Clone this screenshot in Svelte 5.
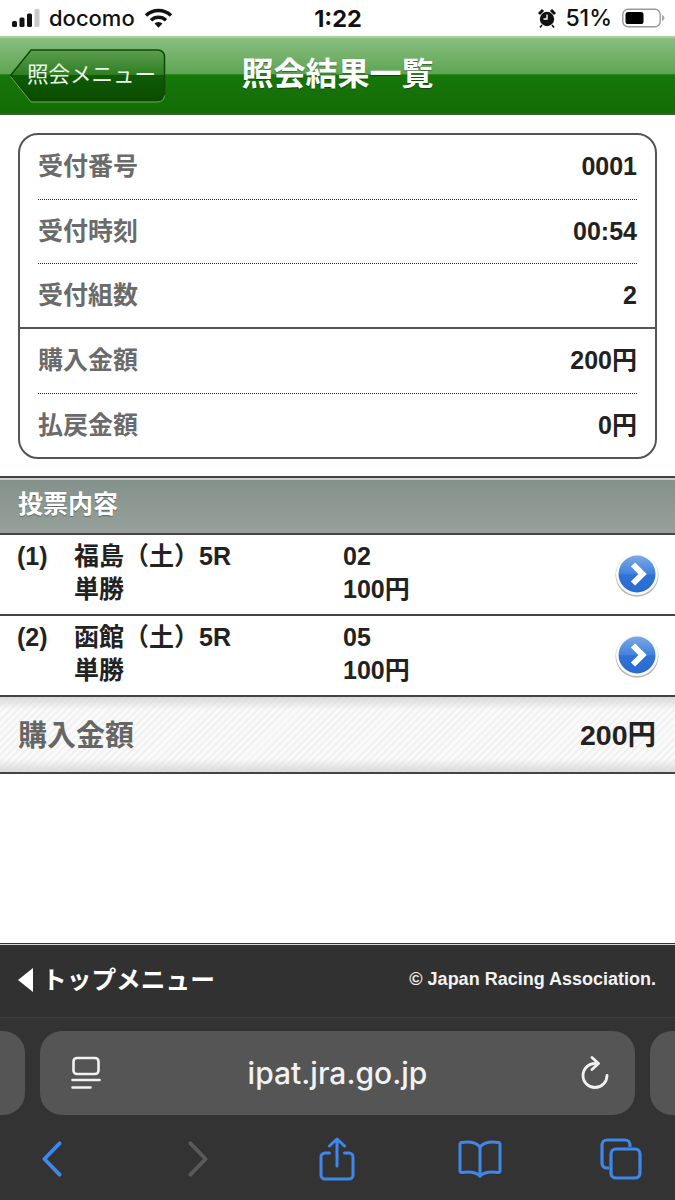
<script>
	const summaryTop = [
		{ label: '受付番号', value: '0001' },
		{ label: '受付時刻', value: '00:54' },
		{ label: '受付組数', value: '2' }
	];
	const summaryBottom = [
		{ label: '購入金額', value: '200円' },
		{ label: '払戻金額', value: '0円' }
	];
	const bets = [
		{ no: '(1)', race: '福島（土）', round: '5R', type: '単勝', horse: '02', amount: '100円' },
		{ no: '(2)', race: '函館（土）', round: '5R', type: '単勝', horse: '05', amount: '100円' }
	];
</script>

<div class="page">
	<div class="status">
		<div class="status-left">
			<svg width="30" height="20" viewBox="0 0 30 20">
				<rect x="1" y="13" width="5" height="6" rx="1.5" fill="#111" />
				<rect x="8.5" y="9.5" width="5" height="9.5" rx="1.5" fill="#111" />
				<rect x="16" y="5.5" width="5" height="13.5" rx="1.5" fill="#111" />
				<rect x="23.5" y="1" width="5" height="18" rx="1.5" fill="#c9c9c9" />
			</svg>
			<span class="carrier">docomo</span>
			<svg class="wifi" width="29" height="20" viewBox="0 0 29 20">
				<path d="M2 7.5a18 18 0 0 1 25 0" fill="none" stroke="#111" stroke-width="3.4" />
				<path d="M7 12.2a11 11 0 0 1 15 0" fill="none" stroke="#111" stroke-width="3.4" />
				<path d="M10.5 15.6a5.6 5.6 0 0 1 8 0L14.500 19.800z" fill="#111" />
			</svg>
		</div>
		<div class="time">1:22</div>
		<div class="status-right">
			<svg width="18" height="20" viewBox="0 0 18 20">
				<circle cx="9" cy="11" r="7.200" fill="#111" />
				<path d="M1 6l4-4M17 6l-4-4" stroke="#111" stroke-width="3" />
				<path d="M9 6.500V11H5.500" fill="none" stroke="#fff" stroke-width="1.400" />
				<path d="M4 17l-2 2.500M14 17l2 2.500" stroke="#111" stroke-width="1.600" />
			</svg>
			<span class="battery-text">51%</span>
			<svg width="43" height="20" viewBox="0 0 43 20">
				<rect x="0.800" y="1.300" width="37.400" height="17.400" rx="5.200" fill="none" stroke="#999" stroke-width="1.400" />
				<rect x="3.500" y="4" width="18" height="12" rx="2.600" fill="#000" />
				<path d="M40 7v6c1.600-.5 2.400-1.700 2.400-3s-.8-2.500-2.400-3z" fill="#aaa" />
			</svg>
		</div>
	</div>

	<header class="topbar">
		<a class="back" href="#menu">
			<svg class="back-shape" width="157" height="55" viewBox="0 0 157 55">
				<defs>
					<linearGradient id="backFill" x1="0" y1="0" x2="0" y2="1">
						<stop offset="0" stop-color="#5b9e50" />
						<stop offset="0.48" stop-color="#2f7f22" />
						<stop offset="0.5" stop-color="#0f5c04" />
						<stop offset="1" stop-color="#0c4a02" />
					</linearGradient>
				</defs>
				<path d="M1.500 27.500L22 2h127a6.500 6.500 0 0 1 6.500 6.500v38a6.500 6.500 0 0 1-6.500 6.500H22z" fill="url(#backFill)" stroke="#0e4a06" stroke-width="1.500" />
				<path d="M1.500 28.500L22 54h127a6.500 6.500 0 0 0 6.500-6.500" fill="none" stroke="#6bab60" stroke-width="1" />
			</svg>
			<span>照会メニュー</span>
		</a>
		<h1>照会結果一覧</h1>
		<div></div>
	</header>

	<main>
		<section class="card">
			<div class="group">
				{#each summaryTop as row}
					<div class="row"><span class="label">{row.label}</span><span class="value">{row.value}</span></div>
				{/each}
			</div>
			<div class="group">
				{#each summaryBottom as row}
					<div class="row"><span class="label">{row.label}</span><span class="value">{row.value}</span></div>
				{/each}
			</div>
		</section>

		<h2 class="section-title">投票内容</h2>

		{#each bets as bet}
			<div class="bet">
				<span class="no">{bet.no}</span>
				<div class="bet-info race">
					<span>{bet.race}{bet.round}</span>
					<span>{bet.type}</span>
				</div>
				<div class="bet-info">
					<span>{bet.horse}</span>
					<span>{bet.amount}</span>
				</div>
				<span class="go">
					<svg width="46" height="46" viewBox="0 0 46 46">
						<defs>
							<linearGradient id="goFill" x1="0" y1="0" x2="0" y2="1">
								<stop offset="0" stop-color="#7aa9e6" />
								<stop offset="0.5" stop-color="#4182dc" />
								<stop offset="0.52" stop-color="#2f72d6" />
								<stop offset="1" stop-color="#2a6cd0" />
							</linearGradient>
						</defs>
						<circle cx="23" cy="24.200" r="21.500" fill="#8a8a8a" opacity="0.600" />
						<circle cx="23" cy="23" r="21" fill="#fbfbfb" />
						<circle cx="23" cy="23" r="18.500" fill="url(#goFill)" />
						<path d="M19 13.500l9.500 9.500-9.500 9.500" fill="none" stroke="#fff" stroke-width="6" />
					</svg>
				</span>
			</div>
		{/each}

		<div class="total">
			<span class="total-label">購入金額</span>
			<span class="total-value">200円</span>
		</div>
	</main>

	<footer class="site-footer">
		<a class="top-link" href="#top"><span class="tri"></span><span class="top-text">トップメニュー</span></a>
		<span class="copy">© Japan Racing Association.</span>
	</footer>

	<div class="safari">
		<div class="address-row">
			<div class="pill side-left"></div>
			<div class="pill address">
				<svg width="30" height="34" viewBox="0 0 30 34" fill="none" stroke="#f2f2f2" stroke-width="2.600" stroke-linecap="round">
					<rect x="2.500" y="2" width="25" height="16" rx="3.500" />
					<path d="M1.500 24h27M1.500 31.500h18" />
				</svg>
				<span class="url">ipat.jra.go.jp</span>
				<svg class="reload" width="30" height="34" viewBox="0 0 30 34" fill="none" stroke="#f2f2f2" stroke-width="2.800" stroke-linecap="round" stroke-linejoin="round">
					<path d="M15 7.500A12 12 0 1 0 27 19.500" />
					<path d="M12 1.500l6.500 6-6.500 6" />
				</svg>
			</div>
			<div class="pill side-right"></div>
		</div>
		<nav class="toolbar">
			<svg width="22" height="36" viewBox="0 0 22 38" fill="none" stroke="#3f87ea" stroke-width="4" stroke-linecap="round" stroke-linejoin="round">
				<path d="M19 2.500L3 19l16 16.500" />
			</svg>
			<svg class="fwd" width="22" height="36" viewBox="0 0 22 38" fill="none" stroke="#5a5a5a" stroke-width="4" stroke-linecap="round" stroke-linejoin="round">
				<path d="M3 2.500L19 19 3 35.500" />
			</svg>
			<svg class="share" width="36" height="44" viewBox="0 0 36 44" fill="none" stroke="#3f87ea" stroke-width="3" stroke-linecap="round" stroke-linejoin="round">
				<path d="M10.500 16H6a4 4 0 0 0-4 4v18a4 4 0 0 0 4 4h24a4 4 0 0 0 4-4V20a4 4 0 0 0-4-4h-4.500" />
				<path d="M18 29V2M10.500 9L18 2l7.500 7" />
			</svg>
			<svg class="book" width="44" height="38" viewBox="0 0 44 38" fill="none" stroke="#3f87ea" stroke-width="3" stroke-linecap="round" stroke-linejoin="round">
				<path d="M22 7C18 2.500 11 1.500 3.500 2.500 2.500 2.700 2 3.500 2 4.500V31c0 1 .8 1.600 1.800 1.500C11 31.500 18 32 22 36c4-4 11-4.500 18.200-3.500 1 .1 1.800-.5 1.800-1.500V4.500c0-1-.5-1.800-1.500-2C33 1.500 26 2.500 22 7z" />
				<path d="M22 7v29" />
			</svg>
			<svg class="tabs" width="42" height="42" viewBox="0 0 42 42" fill="none" stroke="#3f87ea" stroke-width="3.200" stroke-linejoin="round">
				<path d="M9 30H7a5 5 0 0 1-5-5V7a5 5 0 0 1 5-5h18a5 5 0 0 1 5 5v2" />
				<rect x="11" y="11" width="29" height="29" rx="5" />
			</svg>
		</nav>
	</div>
</div>

<style>
	:global(body) {
		background: #fff;
	}

	.page {
		width: 675px;
		height: 1200px;
		display: flex;
		flex-direction: column;
		overflow: hidden;
		font-family: 'Liberation Sans', 'Noto Sans CJK JP', sans-serif;
		color: #222;
	}

	/* status bar */
	.status {
		height: 36px;
		display: grid;
		grid-template-columns: 1fr auto 1fr;
		align-items: center;
		padding: 0 10px 0 11px;
		background: #fff;
		color: #111;
		font-family: Inter, 'Liberation Sans', sans-serif;
	}

	.status-left,
	.status-right {
		display: flex;
		align-items: center;
	}

	.status-right {
		justify-content: flex-end;
	}

	.carrier {
		margin-left: 8px;
		font-size: 22px;
		font-weight: 500;
	}

	.wifi {
		margin-left: 9px;
	}

	.time {
		font-size: 23.500px;
		font-weight: 700;
	}

	.battery-text {
		margin: 0 10px 0 9px;
		font-size: 23px;
		font-weight: 500;
	}

	/* green title bar */
	.topbar {
		height: 79px;
		box-sizing: border-box;
		display: grid;
		grid-template-columns: 1fr auto 1fr;
		align-items: center;
		padding: 0 9px;
		border-top: 2px solid #a9d0a2;
		border-bottom: 2px solid #3c5c36;
		background: linear-gradient(#8abd80 0, #5ea553 48%, #16770a 49%, #146c05 100%);
	}

	.back {
		position: relative;
		width: 157px;
		height: 55px;
		margin-bottom: 1px;
		display: flex;
		align-items: center;
		padding: 0 0 6px 18px;
		box-sizing: border-box;
		color: #eef5ec;
		font-size: 21.500px;
		text-decoration: none;
	}

	.back-shape {
		position: absolute;
		left: 0;
		top: 0;
	}

	.back span {
		position: relative;
	}

	h1 {
		margin: 0 0 3px;
		color: #fff;
		font-size: 32px;
		font-weight: 700;
		line-height: 1;
		text-shadow: 0 1px 1px rgba(0, 0, 0, 0.400);
	}

	main {
		flex: 1;
		background: #fff;
	}

	/* summary card */
	.card {
		margin: 18px 18px 17px;
		border: 2px solid #555;
		border-radius: 20px;
	}

	.group + .group {
		border-top: 2px solid #555;
	}

	.row {
		height: 64px;
		box-sizing: border-box;
		margin: 0 18px;
		padding-bottom: 2px;
		display: flex;
		justify-content: space-between;
		align-items: center;
		font-size: 25px;
		font-weight: 700;
	}

	.row + .row {
		border-top: 1px dotted #222;
	}

	.label {
		margin-bottom: 4px;
		color: #6b6b6b;
	}

	.value {
		line-height: 30px;
	}

	/* bet list */
	.section-title {
		height: 59px;
		box-sizing: border-box;
		margin: 0;
		padding: 0 0 7px 18px;
		display: flex;
		align-items: center;
		border-top: 2px solid #444;
		border-bottom: 2px solid #444;
		box-shadow: inset 0 2px 0 #c9d0cb;
		background: linear-gradient(#84908a, #96a19b);
		color: #fff;
		font-size: 25px;
		font-weight: 700;
		text-shadow: 0 1px 1px rgba(0, 0, 0, 0.350);
	}

	.bet {
		height: 81px;
		box-sizing: border-box;
		padding: 5px 15px 0 17px;
		display: flex;
		align-items: flex-start;
		border-bottom: 2px solid #444;
		font-size: 25px;
		font-weight: 700;
		line-height: 33px;
	}

	.no {
		width: 57px;
		flex: none;
	}

	.bet-info {
		display: flex;
		flex-direction: column;
	}

	.race {
		width: 269px;
		flex: none;
	}

	.go {
		margin: 11px 0 0 auto;
		height: 46px;
	}

	/* total strip */
	.total {
		height: 77px;
		box-sizing: border-box;
		padding: 0 19px 4px 18px;
		display: flex;
		justify-content: space-between;
		align-items: center;
		border-bottom: 2px solid #444;
		background:
			linear-gradient(rgba(215, 215, 215, 0.900), rgba(255, 255, 255, 0) 13px, rgba(255, 255, 255, 0) 62px, rgba(215, 215, 215, 0.900)),
			repeating-linear-gradient(135deg, #f1f1f1 0, #f1f1f1 2px, #fafafa 2px, #fafafa 5px);
		font-weight: 700;
	}

	.total-label {
		color: #666;
		font-size: 29px;
	}

	.total-value {
		font-size: 28.500px;
	}

	/* site footer */
	.site-footer {
		height: 75px;
		box-sizing: border-box;
		padding: 0 19px 3px 18px;
		display: flex;
		justify-content: space-between;
		align-items: center;
		border-top: 1px solid #333;
		box-shadow: inset 0 1px 0 #d8d8d8, inset 0 -1px 0 #3d3d3d;
		background: #313131;
		color: #fff;
		font-weight: 700;
	}

	.top-link {
		display: flex;
		align-items: center;
		color: #fff;
		font-size: 24.700px;
		text-decoration: none;
	}

	.top-text {
		margin-bottom: 3px;
	}

	.tri {
		width: 0;
		height: 0;
		margin-right: 9px;
		border-top: 12.500px solid transparent;
		border-bottom: 12.500px solid transparent;
		border-right: 15px solid #fff;
	}

	.copy {
		font-size: 18px;
		color: #f2f2f2;
	}

	/* browser chrome */
	.safari {
		height: 182px;
		box-sizing: border-box;
		padding-top: 13px;
		background: #333;
	}

	.address-row {
		display: grid;
		grid-template-columns: 25px 595px 25px;
		column-gap: 15px;
	}

	.pill {
		height: 84px;
		background: #555;
		border-radius: 22px;
	}

	.side-left {
		border-radius: 0 22px 22px 0;
	}

	.side-right {
		border-radius: 22px 0 0 22px;
	}

	.address {
		box-sizing: border-box;
		padding: 0 25px 0 31px;
		display: grid;
		grid-template-columns: 1fr auto 1fr;
		align-items: center;
	}

	.reload {
		justify-self: end;
	}

	.url {
		margin-left: -6px;
		color: #f2f2f2;
		font-family: Inter, 'Liberation Sans', sans-serif;
		font-size: 30px;
		font-weight: 500;
	}

	.toolbar {
		margin-top: 22px;
		padding-left: 41px;
		display: flex;
		align-items: center;
	}

	.fwd {
		margin-left: 124px;
	}

	.share {
		margin-left: 110px;
	}

	.book {
		margin-left: 103px;
	}

	.tabs {
		margin-left: 98px;
	}
</style>
